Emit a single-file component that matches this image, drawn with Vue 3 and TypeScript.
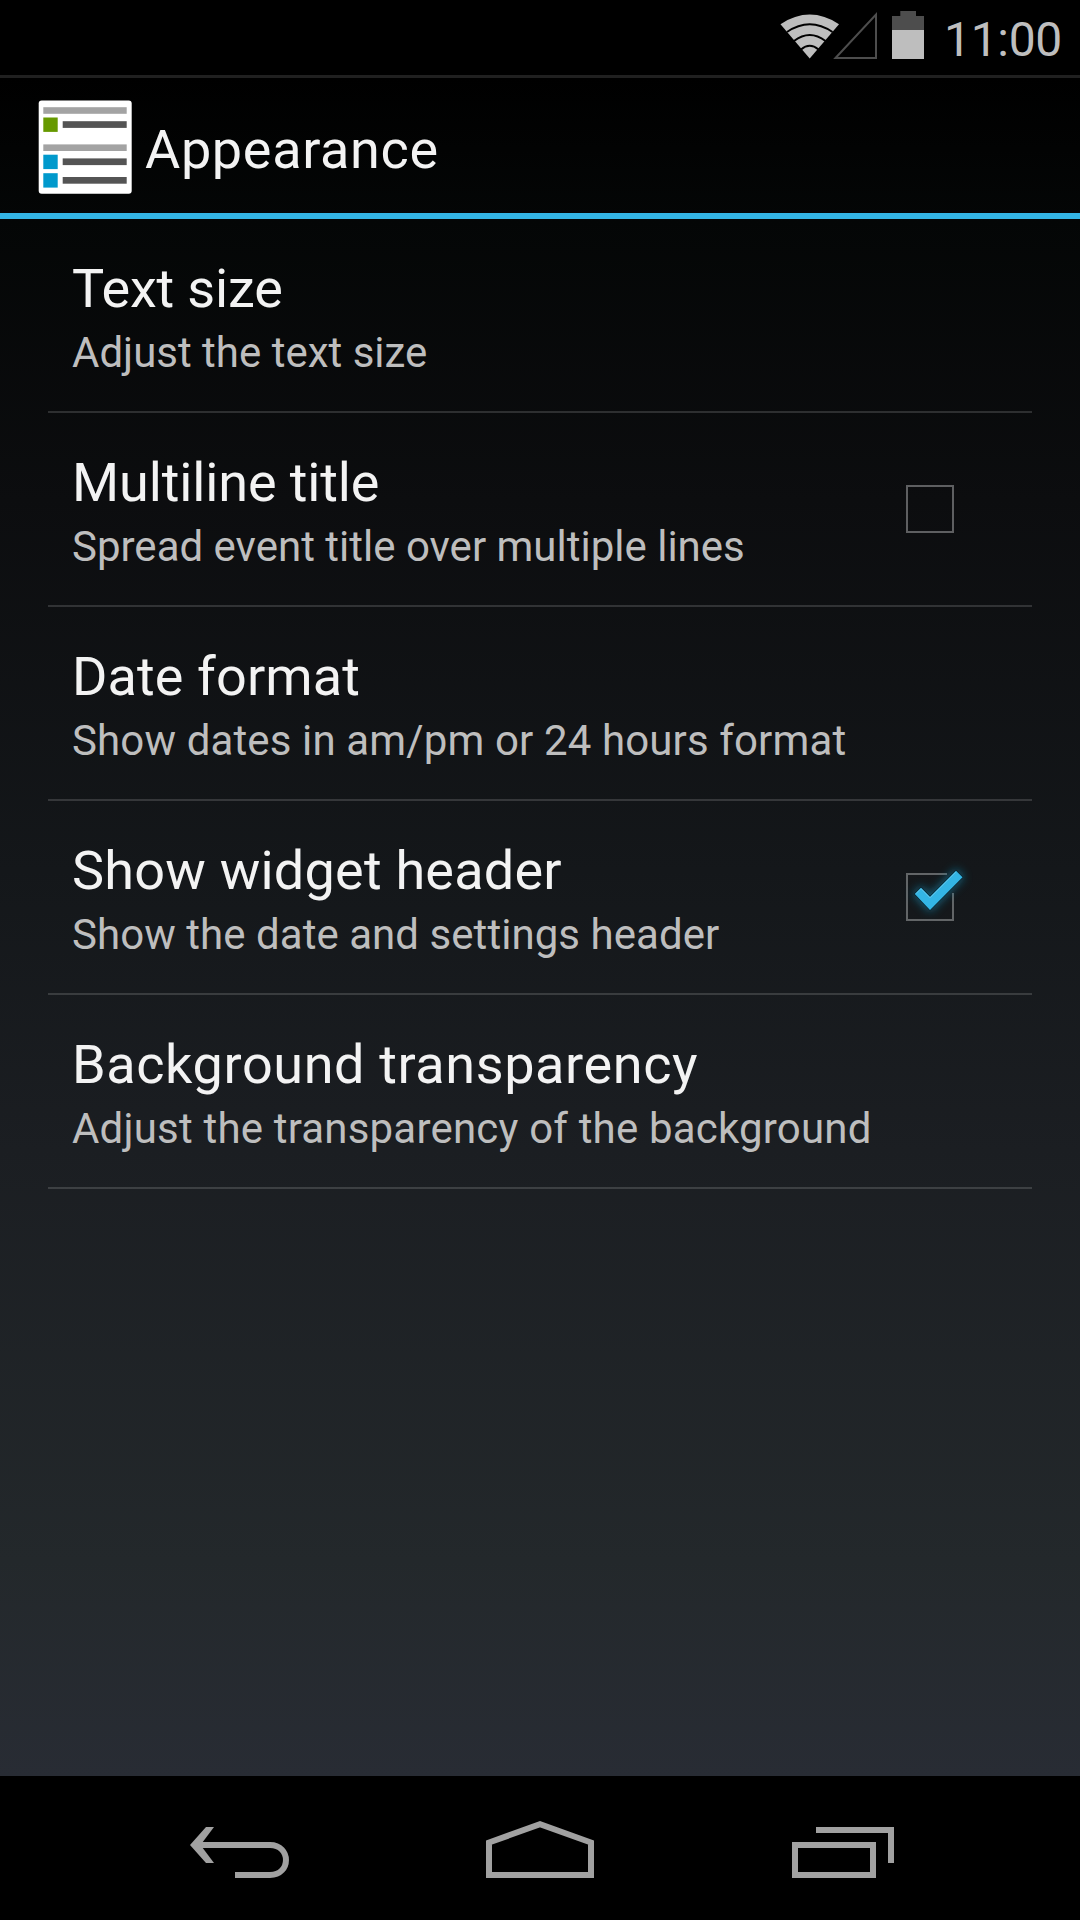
<script setup lang="ts">
interface Preference {
  title: string
  summary: string
  titleSpacing: number
  summarySpacing: number
  checked?: boolean
}

const preferences: Preference[] = [
  { title: 'Text size', summary: 'Adjust the text size', titleSpacing: -0.15, summarySpacing: 0 },
  { title: 'Multiline title', summary: 'Spread event title over multiple lines', titleSpacing: -0.12, summarySpacing: 0, checked: false },
  { title: 'Date format', summary: 'Show dates in am/pm or 24 hours format', titleSpacing: 0.12, summarySpacing: 0.13 },
  { title: 'Show widget header', summary: 'Show the date and settings header', titleSpacing: 0.22, summarySpacing: 0.05, checked: true },
  { title: 'Background transparency', summary: 'Adjust the transparency of the background', titleSpacing: 0.61, summarySpacing: 0.19 },
]
</script>

<template>
  <div class="screen">
    <div class="status">
      <svg class="signals" width="150" height="75" viewBox="780 0 150 75">
        <path d="M809.7 58.500 L780.500 24.200 Q809.7 5 839 24.200 Z" fill="#bebebe" />
        <g fill="none" stroke="#000" stroke-width="2">
          <path d="M787 32 Q809.7 16.500 832.500 32" />
          <path d="M794 41 Q809.7 29 825.500 41" />
          <path d="M801 49.500 Q809.7 42 818.500 49.500" />
        </g>
        <path d="M835.500 58 L876 14.500 V58 Z" fill="none" stroke="#4d4d4d" stroke-width="2" />
        <path d="M892 30 V16 H900.300 V11 H916 V16 H924 V30 Z" fill="#4d4d4d" />
        <rect x="892" y="30" width="32" height="29" fill="#bebebe" />
      </svg>
      <span class="clock">11:00</span>
    </div>
    <header class="bar">
      <svg width="96" height="96" viewBox="38 99 96 96">
        <rect x="38.700" y="100.500" width="93" height="93.200" rx="3" fill="#fff" />
        <g fill="#a3a3a3"><rect x="43.300" y="107.200" width="83.400" height="6.600" /><rect x="43.300" y="144.400" width="83.400" height="6.600" /></g>
        <g fill="#545454"><rect x="62.700" y="121.200" width="64" height="6.700" /><rect x="62.700" y="158.400" width="64" height="6.700" /><rect x="62.700" y="177" width="64" height="6.700" /></g>
        <rect x="43.300" y="117.500" width="14.400" height="14.400" fill="#690" />
        <g fill="#09c"><rect x="43.300" y="154.700" width="14.400" height="14.400" /><rect x="43.300" y="173.200" width="14.400" height="14.400" /></g>
      </svg>
      <h1>Appearance</h1>
    </header>
    <main>
      <div v-for="p in preferences" :key="p.title" class="row">
        <div class="copy">
          <div class="title" :style="{ letterSpacing: p.titleSpacing + 'px' }">{{ p.title }}</div>
          <div class="summary" :style="{ letterSpacing: p.summarySpacing + 'px' }">{{ p.summary }}</div>
        </div>
        <svg v-if="p.checked !== undefined" class="check" width="96" height="96" viewBox="0 0 96 96">
          <rect v-if="!p.checked" x="25" y="25" width="46" height="46" fill="none" stroke="#5e5f61" stroke-width="2" />
          <template v-else>
            <defs>
              <filter id="glow" x="-40%" y="-40%" width="180%" height="180%"><feGaussianBlur stdDeviation="5" /></filter>
            </defs>
            <path d="M65 25 H25 V71 H71 V44" fill="none" stroke="#626567" stroke-width="2" />
            <path d="M32.500 45 L39 38.500 L48 47.500 L74 21.500 L80.500 28 L48 61 Z" fill="#1887ad" stroke="#1887ad" stroke-width="3" opacity=".65" filter="url(#glow)" />
            <path d="M32.800 45 L39 38.700 L48 47.700 L74 21.700 L80.500 28.200 L48 60.900 Z" fill="#0b2731" stroke="#0b2731" stroke-width="1.600" />
            <path d="M32.800 45 L39 38.700 L48 47.700 L74 21.700 L80.500 28.200 L48 60.900 Z" fill="#33b5e5" />
            <path d="M34 44.700 L39 39.700 L48 48.900 L74 22.900" fill="none" stroke="#62c5e9" stroke-width="1" />
          </template>
        </svg>
      </div>
    </main>
    <nav>
      <svg width="1080" height="144" viewBox="0 1776 1080 144">
        <g fill="none" stroke="#a1a1a1" stroke-width="6">
          <path d="M197 1845 H270 C291.300 1845 291.300 1875 270 1875 H235" />
          <path d="M489 1875 V1842.500 L540 1824.200 L591 1842.500 V1875 Z" />
          <rect x="795" y="1845" width="78" height="30" />
          <path d="M816 1830 H891 V1863" />
        </g>
        <path d="M206 1827 H214 L200.500 1845 L214 1863 H206 L190 1845 Z" fill="#a1a1a1" />
      </svg>
    </nav>
  </div>
</template>

<style>
body {
  margin: 0;
  background: #000;
}
</style>

<style scoped>
.screen {
  width: 1080px;
  height: 1920px;
  display: flex;
  flex-direction: column;
  overflow: hidden;
  font-family: Roboto, sans-serif;
  color: #f3f3f3;
  background: linear-gradient(#000 78px, #040606 219px, #0c0d0f 500px, #14171a 870px, #1b1e22 1150px, #23282b 1560px, #282c34 1776px);
}
.status {
  height: 75px;
  display: flex;
  align-items: center;
  justify-content: flex-end;
  background: #000;
  border-bottom: 3px solid #202020;
}
.clock {
  width: 150px;
  padding-left: 14px;
  box-sizing: border-box;
  line-height: 56px;
  padding-top: 4px;
  font-size: 48px;
  letter-spacing: -0.3px;
  color: #bebebe;
  white-space: nowrap;
}
.bar {
  height: 135px;
  display: flex;
  align-items: center;
  padding-left: 38px;
  padding-top: 3px;
  box-sizing: border-box;
}
.bar svg {
  margin-top: -1px;
}
h1 {
  margin: 6px 0 0 11px;
  font-size: 54px;
  font-weight: 400;
  line-height: 64px;
  letter-spacing: 0.66px;
}
main {
  flex: 1;
  border-top: 6px solid #33b5e5;
  padding: 0 48px;
}
.row {
  height: 194px;
  box-sizing: border-box;
  display: flex;
  justify-content: space-between;
  padding: 38px 54px 0 24px;
  border-bottom: 2px solid rgba(255, 255, 255, 0.15);
}
.copy {
  white-space: nowrap;
}
.title {
  font-size: 54px;
  line-height: 64px;
}
.summary {
  margin-top: 4px;
  font-size: 42px;
  line-height: 56px;
  color: #bebebe;
}
.check {
  margin-top: 10px;
}
nav {
  height: 144px;
  background: #000;
}
svg {
  display: block;
  flex: none;
}
</style>
